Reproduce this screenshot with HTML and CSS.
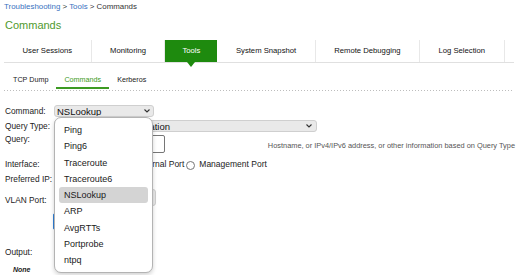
FILE: index.html
```html
<!DOCTYPE html>
<html>
<head>
    <meta charset="UTF-8">
    <title>Commands</title>
    <link rel="stylesheet" href="styles.css">
</head>
<body>
<div class="crumbs"><a href="#">Troubleshooting</a> &gt; <a href="#">Tools</a> &gt; Commands</div>
<h1 class="title">Commands</h1>

<ul class="tabs">
    <li>User Sessions</li>
    <li>Monitoring</li>
    <li class="active">Tools</li>
    <li>System Snapshot</li>
    <li>Remote Debugging</li>
    <li>Log Selection</li>
</ul>

<ul class="subtabs">
    <li>TCP Dump</li>
    <li class="active">Commands</li>
    <li>Kerberos</li>
</ul>

<form class="cmd-form">
    <div class="row r-command">
        <label>Command:</label>
        <div class="select-wrap">
            <div class="select sel-command">
                <span>NSLookup</span>
                <svg class="chev" width="6" height="4" viewBox="0 0 6 4"><polyline points="0.5,0.5 3,3 5.5,0.5"/></svg>
            </div>
            <ul class="popup">
                <li>Ping</li>
                <li>Ping6</li>
                <li>Traceroute</li>
                <li>Traceroute6</li>
                <li class="hover">NSLookup</li>
                <li>ARP</li>
                <li>AvgRTTs</li>
                <li>Portprobe</li>
                <li>ntpq</li>
            </ul>
        </div>
    </div>

    <div class="row r-qtype">
        <label>Query Type:</label>
        <div class="select sel-qtype">
            <span>Name/Address Information</span>
            <svg class="chev" width="6" height="4" viewBox="0 0 6 4"><polyline points="0.5,0.5 3,3 5.5,0.5"/></svg>
        </div>
    </div>

    <div class="row r-query">
        <label>Query:</label>
        <input type="text" class="query">
        <span class="hint">Hostname, or IPv4/IPv6 address, or other information based on Query Type</span>
    </div>

    <div class="row r-iface">
        <label>Interface:</label>
        <span class="opt first"><input type="radio" name="iface" checked></span>
        <span class="opt"><input type="radio" name="iface">Internal Port</span>
        <span class="opt"><input type="radio" name="iface">Management Port</span>
    </div>

    <div class="row r-pref">
        <label>Preferred IP:</label>
        <span class="opt"><input type="radio" name="ip" checked></span>
        <span class="opt"><input type="radio" name="ip"></span>
    </div>

    <div class="row r-vlan">
        <label>VLAN Port:</label>
        <div class="select sel-vlan"></div>
    </div>

    <div class="row r-run">
        <label></label>
        <button type="button" class="run" aria-label="Run"></button>
    </div>

    <div class="row r-output">
        <label>Output:</label>
    </div>
    <div class="none">None</div>
</form>
</body>
</html>
```

FILE: styles.css
```css
body {
    margin: 0;
    padding: 0 3px 0 4px;
    font-family: "Liberation Sans", Arial, sans-serif;
    color: #222;
    background-color: #fff;
    overflow: hidden;
}
.crumbs {
    font-size: 7.9px;
    line-height: 13px;
    color: #333;
}
.crumbs a {
    color: #3a72c0;
    text-decoration: none;
}
.title {
    margin: 4px 0 0;
    padding-left: 1px;
    font-size: 11px;
    font-weight: normal;
    line-height: 16px;
    color: #4f9a2e;
}
.tabs {
    display: flex;
    list-style: none;
    margin: 7px 0 0;
    padding: 0;
    height: 22px;
    border-bottom: 1px solid #e0e0e0;
}
.tabs li {
    position: relative;
    padding: 0 18.5px;
    font-size: 7.7px;
    line-height: 22px;
    color: #111;
    border-right: 1px solid #e8e8e8;
    white-space: nowrap;
}
.tabs li.active {
    padding: 0 17px;
    background-color: #1e8a0e;
    color: #fff;
    border-right: none;
}
.tabs li.active::after {
    content: "";
    position: absolute;
    top: 100%;
    left: 50%;
    margin-left: -4.5px;
    border-left: 4.5px solid transparent;
    border-right: 4.5px solid transparent;
    border-top: 5px solid #1e8a0e;
}
.subtabs {
    display: flex;
    list-style: none;
    margin: 10px 0 0;
    padding: 0 0 2px 1px;
    background: linear-gradient(to right, #bdbdbd 1px, transparent 1px) repeat-x left bottom / 3px 1px;
}
.subtabs li {
    padding: 0 8px;
    font-size: 7.2px;
    line-height: 14px;
    color: #222;
    border-bottom: 2px solid transparent;
}
.subtabs li.active {
    color: #3c9a22;
    border-bottom-color: #3c9a22;
}
.cmd-form {
    margin-top: 14px;
    padding-left: 1px;
}
.row {
    display: flex;
    align-items: center;
}
.row > label {
    flex: none;
    width: 49px;
    font-size: 8.3px;
    line-height: 10px;
    color: #222;
}
.select {
    display: flex;
    align-items: center;
    justify-content: space-between;
    box-sizing: border-box;
    padding: 0 3px 0 2px;
    background-color: #e9e9e9;
    border: 1px solid #cfcfcf;
    border-radius: 3px;
    font-size: 9.5px;
    color: #111;
    white-space: nowrap;
    overflow: hidden;
}
.chev {
    flex: none;
    fill: none;
    stroke: #333;
    stroke-width: 1.1;
}
.r-command {
    height: 12px;
}
.select-wrap {
    position: relative;
}
.sel-command {
    width: 100px;
    height: 12px;
}
.popup {
    position: absolute;
    top: 100%;
    left: 0;
    z-index: 10;
    box-sizing: border-box;
    width: 99px;
    margin: 0;
    padding: 4px 0;
    list-style: none;
    background-color: #fff;
    border: 1px solid #b3b3b3;
    border-radius: 7px;
    box-shadow: 0 2px 4px rgba(0, 0, 0, 0.18);
}
.popup li {
    margin: 0 4px;
    padding-left: 5px;
    height: 16.25px;
    line-height: 16.25px;
    font-size: 9px;
    color: #1a1a1a;
    border-radius: 3px;
}
.popup li.hover {
    background-color: #d4d4d4;
}
.r-qtype {
    margin-top: 3px;
    height: 12px;
}
.sel-qtype {
    width: 263px;
    height: 12px;
    padding-right: 4px;
}
.r-query {
    margin-top: 3px;
    height: 18px;
    align-items: flex-start;
}
.r-query > label {
    margin-top: -1px;
}
.query {
    box-sizing: border-box;
    width: 111px;
    height: 18px;
    margin: 0;
    border: 1px solid #767676;
    border-radius: 2px;
}
.hint {
    margin: 6px -1px 0 auto;
    font-size: 7.4px;
    line-height: 9px;
    color: #555;
    white-space: nowrap;
}
.r-iface {
    margin-top: 4px;
    height: 14px;
}
.r-pref {
    margin-top: 1px;
    height: 14px;
}
.opt {
    display: flex;
    align-items: center;
    font-size: 8.5px;
    white-space: nowrap;
}
.opt.first {
    width: 69px;
}
.opt input {
    appearance: none;
    box-sizing: border-box;
    width: 9px;
    height: 9px;
    margin: 2px 4px 0 2px;
    border: 1px solid #777;
    border-radius: 50%;
    background-color: #fff;
}
.r-vlan {
    margin-top: 3px;
    height: 17px;
}
.r-vlan > label {
    padding-top: 4px;
}
.sel-vlan {
    width: 102px;
    height: 17px;
}
.r-run {
    margin-top: 7px;
    height: 17px;
}
.run {
    width: 60px;
    height: 17px;
    margin-left: -1px;
    background-color: #2f7fd6;
    border: 1px solid #2f7fd6;
    border-radius: 2px;
}
.r-output {
    margin-top: 16px;
    height: 12px;
}
.none {
    margin-top: 7px;
    padding-left: 8px;
    font-size: 7px;
    line-height: 10px;
    font-weight: bold;
    font-style: italic;
}
```
